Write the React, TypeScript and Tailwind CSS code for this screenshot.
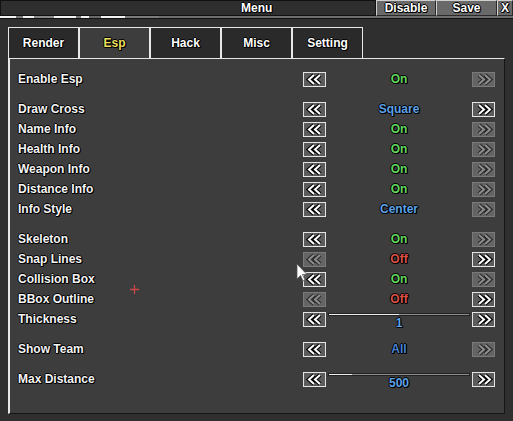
import React from 'react';

type Row = {
  label: string;
  value: string;
  color: string;
  left: boolean;
  right: boolean;
  slider?: number;
};

const GREEN = 'text-[#63d85f]';
const RED = 'text-[#dc5147]';
const BLUE = 'text-[#5ea3e6]';
const DBLUE = 'text-[#4a83d6]';

const groups: Row[][] = [
  [{ label: 'Enable Esp', value: 'On', color: GREEN, left: true, right: false }],
  [
    { label: 'Draw Cross', value: 'Square', color: BLUE, left: true, right: true },
    { label: 'Name Info', value: 'On', color: GREEN, left: true, right: false },
    { label: 'Health Info', value: 'On', color: GREEN, left: true, right: false },
    { label: 'Weapon Info', value: 'On', color: GREEN, left: true, right: false },
    { label: 'Distance Info', value: 'On', color: GREEN, left: true, right: false },
    { label: 'Info Style', value: 'Center', color: BLUE, left: true, right: false },
  ],
  [
    { label: 'Skeleton', value: 'On', color: GREEN, left: true, right: false },
    { label: 'Snap Lines', value: 'Off', color: RED, left: false, right: true },
    { label: 'Collision Box', value: 'On', color: GREEN, left: true, right: false },
    { label: 'BBox Outline', value: 'Off', color: RED, left: false, right: true },
    { label: 'Thickness', value: '1', color: BLUE, left: true, right: true, slider: 0.5 },
  ],
  [{ label: 'Show Team', value: 'All', color: DBLUE, left: true, right: false }],
  [{ label: 'Max Distance', value: '500', color: BLUE, left: true, right: true, slider: 0.165 }],
];

const tabs = ['Render', 'Esp', 'Hack', 'Misc', 'Setting'];

const outline = '[text-shadow:1px_0_0_#000,-1px_0_0_#000,0_1px_0_#000,0_-1px_0_#000,1px_1px_0_#000]';

function Chevrons({ dir, on }: { dir: 'l' | 'r'; on: boolean }) {
  const pts =
    dir === 'l'
      ? ['9,2 4,6.5 9,11', '15,2 10,6.5 15,11']
      : ['5,2 10,6.5 5,11', '11,2 16,6.5 11,11'];
  return (
    <svg width="20" height="13" viewBox="0 0 20 13">
      {pts.map((p) => (
        <polyline key={p + 'o'} points={p} fill="none" stroke={on ? '#000' : '#2a2a2a'} strokeWidth="4.2" strokeLinejoin="miter" />
      ))}
      {pts.map((p) => (
        <polyline key={p} points={p} fill="none" stroke={on ? '#fff' : '#8e8e8e'} strokeWidth="2" strokeLinejoin="miter" />
      ))}
    </svg>
  );
}

function ArrowButton({ dir, on }: { dir: 'l' | 'r'; on: boolean }) {
  return (
    <div
      className={`w-[23px] h-[15px] flex items-center justify-center border ${
        on ? 'border-[#e4e4e4] bg-[#5c5c5c]' : 'border-[#7a7a7a] bg-[#646464]'
      }`}
    >
      <Chevrons dir={dir} on={on} />
    </div>
  );
}

function OptionRow({ row }: { row: Row }) {
  return (
    <div className="h-[20px] flex items-center">
      <span className={`flex-1 text-[#f4f4f4] ${outline}`}>{row.label}</span>
      <div className="flex items-center w-[192px]">
        <ArrowButton dir="l" on={row.left} />
        <div className="flex-1 relative h-[20px] flex items-center justify-center">
          {row.slider !== undefined ? (
            <div className="w-full h-full flex flex-col items-center">
              <div className="mt-[4px] mx-[2px] self-stretch h-[6px] border border-[#222] bg-[#8e8e8e] flex">
                <div className="h-full bg-[#f0f0f0]" style={{ width: `${row.slider * 100}%` }} />
              </div>
              <span className={`leading-none mt-[1px] ${row.color} ${outline}`}>{row.value}</span>
            </div>
          ) : (
            <span className={`${row.color} ${outline}`}>{row.value}</span>
          )}
        </div>
        <ArrowButton dir="r" on={row.right} />
      </div>
    </div>
  );
}

export default function App() {
  return (
    <div
      className="w-[513px] h-[421px] bg-[#2f2f2f] relative overflow-hidden text-[12px] font-bold"
      style={{ fontFamily: '"Liberation Sans", Arial, sans-serif' }}
    >
      {/* Title bar */}
      <div className="h-[16px] flex bg-[#141414]">
        <div className={`flex-1 bg-[#2e2e2e] border border-[#111] flex items-center pl-[240px] text-white ${outline}`}>
          Menu
        </div>
        <div className="flex">
          {[
            ['Disable', 'w-[60px]'],
            ['Save', 'w-[61px]'],
            ['X', 'w-[16px]'],
          ].map(([t, w]) => (
            <div
              key={t}
              className={`${w} h-[16px] bg-[#696969] border border-t-[#cfcfcf] border-l-[#cfcfcf] border-b-[#2a2a2a] border-r-[#2a2a2a] flex items-center justify-center text-white ${outline}`}
            >
              {t}
            </div>
          ))}
        </div>
      </div>

      {/* game background peeking through */}
      <div className="h-[2px] flex bg-[#f2f2f2]">
        <div className="w-[16px]" />
        <div className="w-[7px] bg-[#7a7a7a]" />
        <div className="w-[11px]" />
        <div className="w-[20px] bg-[#8a8a8a]" />
        <div className="w-[22px]" />
        <div className="w-[5px] bg-[#777]" />
        <div className="w-[8px]" />
        <div className="w-[12px] bg-[#6a6a6a]" />
        <div className="w-[24px]" />
        <div className="w-[34px] bg-[#7c7c7c]" />
        <div className="flex-1 bg-[#6d6d6d]" />
      </div>

      {/* Window */}
      <div className="border-t border-[#111] h-[403px] px-[8px] pt-[8px] flex flex-col">
        <div className="flex h-[31px]">
          {tabs.map((t) => (
            <div
              key={t}
              className={`w-[71px] border-t border-l border-r border-[#e8e8e8] flex items-center justify-center ${outline} ${
                t === 'Esp' ? 'bg-[#3d3d3d] text-[#ecdf5c]' : 'bg-[#2a2a2a] text-white'
              }`}
            >
              {t}
            </div>
          ))}
        </div>
        <div className="h-[356px] bg-[#3d3d3d] border-t border-l-2 border-t-[#e8e8e8] border-l-[#e8e8e8] border-b border-r border-b-[#151515] border-r-[#151515] pl-[8px] pr-[9px] pt-[10px] flex flex-col gap-[10px]">
          {groups.map((g, i) => (
            <div key={i} className="flex flex-col">
              {g.map((r) => (
                <OptionRow key={r.label} row={r} />
              ))}
            </div>
          ))}
        </div>
      </div>

      {/* red crosshair */}
      <svg className="absolute left-[130px] top-[285px]" width="9" height="9" viewBox="0 0 9 9">
        <path d="M4.5 0v9M0 4.5h9" stroke="#c84848" strokeWidth="1.3" />
      </svg>

      {/* mouse cursor */}
      <svg className="absolute left-[296px] top-[263px]" width="12" height="19" viewBox="0 0 12 19">
        <path d="M1 1 L1 16 L4.5 12.5 L7 18 L9 17 L6.5 11.5 L11 11.5 Z" fill="#fff" stroke="#555" strokeWidth="0.8" />
      </svg>
    </div>
  );
}
